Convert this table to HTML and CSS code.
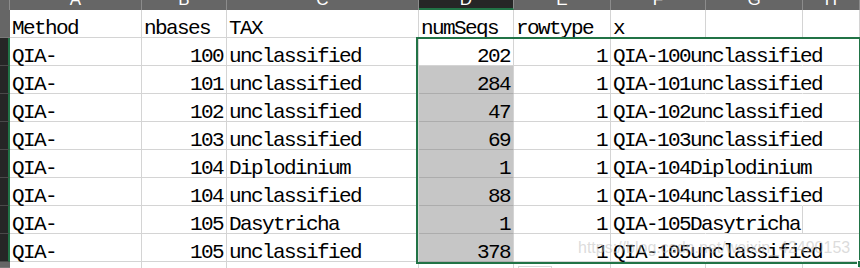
FILE: index.html
```html
<!DOCTYPE html>
<html>
<head>
<meta charset="utf-8">
<link rel="stylesheet" href="styles.css">
</head>
<body>
<div class="sheet">
  <div class="corner"></div>
  <div class="colhead"><span>A</span></div>
  <div class="colhead"><span>B</span></div>
  <div class="colhead"><span>C</span></div>
  <div class="colhead on"><span>D</span></div>
  <div class="colhead"><span>E</span></div>
  <div class="colhead"><span>F</span></div>
  <div class="colhead"><span>G</span></div>
  <div class="colhead"><span>H</span></div>

  <div class="rowhead"></div>
  <div class="c">Method</div><div class="c">nbases</div><div class="c">TAX</div><div class="c">numSeqs</div><div class="c">rowtype</div><div class="c">x</div><div class="c"></div><div class="c"></div>

  <div class="rowhead on"></div>
  <div class="c">QIA-</div><div class="c n">100</div><div class="c">unclassified</div><div class="c n">202</div><div class="c n">1</div><div class="c ov">QIA-100unclassified</div><div class="c ov"></div><div class="c"></div>

  <div class="rowhead on"></div>
  <div class="c">QIA-</div><div class="c n">101</div><div class="c">unclassified</div><div class="c n g">284</div><div class="c n">1</div><div class="c ov">QIA-101unclassified</div><div class="c ov"></div><div class="c"></div>

  <div class="rowhead on"></div>
  <div class="c">QIA-</div><div class="c n">102</div><div class="c">unclassified</div><div class="c n g">47</div><div class="c n">1</div><div class="c ov">QIA-102unclassified</div><div class="c ov"></div><div class="c"></div>

  <div class="rowhead on"></div>
  <div class="c">QIA-</div><div class="c n">103</div><div class="c">unclassified</div><div class="c n g">69</div><div class="c n">1</div><div class="c ov">QIA-103unclassified</div><div class="c ov"></div><div class="c"></div>

  <div class="rowhead on"></div>
  <div class="c">QIA-</div><div class="c n">104</div><div class="c">Diplodinium</div><div class="c n g">1</div><div class="c n">1</div><div class="c ov">QIA-104Diplodinium</div><div class="c ov"></div><div class="c"></div>

  <div class="rowhead on"></div>
  <div class="c">QIA-</div><div class="c n">104</div><div class="c">unclassified</div><div class="c n g">88</div><div class="c n">1</div><div class="c ov">QIA-104unclassified</div><div class="c ov"></div><div class="c"></div>

  <div class="rowhead on"></div>
  <div class="c">QIA-</div><div class="c n">105</div><div class="c">Dasytricha</div><div class="c n g">1</div><div class="c n">1</div><div class="c ov">QIA-105Dasytricha</div><div class="c"></div><div class="c"></div>

  <div class="rowhead on"></div>
  <div class="c">QIA-</div><div class="c n">105</div><div class="c">unclassified</div><div class="c n g">378</div><div class="c n">1</div><div class="c ov">QIA-105unclassified</div><div class="c ov"></div><div class="c"></div>

  <div class="rowhead"></div>
  <div class="c"></div><div class="c"></div><div class="c"></div><div class="c"></div><div class="c"></div><div class="c"></div><div class="c"></div><div class="c"></div>

  <div class="selection"><div class="handle"></div></div>
  <div class="quick"></div>
</div>
<div class="watermark">https://blog.csdn.net/weixin_42490153</div>
</body>
</html>
```

FILE: styles.css
```css
html, body {
  margin: 0;
  padding: 0;
  overflow: hidden;
  background: #ffffff;
}

body {
  width: 860px;
  height: 268px;
  position: relative;
}

.sheet {
  position: relative;
  display: grid;
  grid-template-columns: 10px 132px 85px 192px 95px 97px 95px 97px 1fr;
  grid-template-rows: 10px repeat(9, 28px) 6px;
  height: 268px;
  overflow: hidden;
  background: #ffffff;
  font-family: "Liberation Mono", "DejaVu Sans Mono", monospace;
  font-size: 21px;
  letter-spacing: -1.6px;
  color: #000000;
}

.corner {
  background: #666666;
  border-right: 1px solid #8c8c8c;
  box-sizing: border-box;
}

.colhead {
  background: #666666;
  border-right: 1px solid #8c8c8c;
  box-sizing: border-box;
  overflow: hidden;
  color: #ffffff;
  font-family: "Liberation Sans", Arial, sans-serif;
  font-size: 17px;
  letter-spacing: 0;
  line-height: 17px;
  text-align: center;
}

.colhead span {
  display: block;
  margin-top: -9px;
}

.colhead.on {
  background: #262626;
  border-bottom: 2px solid #217346;
}

.rowhead {
  background: #666666;
  border-bottom: 1px solid #7a7a7a;
  box-sizing: border-box;
}

.rowhead.on {
  background: #262626;
  border-bottom-color: #4a4a4a;
  border-right: 2px solid #217346;
}

.c {
  box-sizing: border-box;
  border-right: 1px solid #d4d4d4;
  border-bottom: 1px solid #d4d4d4;
  padding: 9px 4px 0 2px;
  line-height: 20px;
  white-space: nowrap;
  overflow: visible;
}

.c.n {
  text-align: right;
  padding-right: 3px;
}

.c.ov {
  border-right-color: transparent;
}

.c.g {
  background: #c6c6c6;
  border-bottom-color: #acacac;
}

.selection {
  position: absolute;
  grid-column: 5;
  grid-row: 3 / 11;
  top: -1px;
  left: -3px;
  right: -1px;
  bottom: -2px;
  border: 2px solid #217346;
  pointer-events: none;
}

.handle {
  position: absolute;
  right: -5px;
  bottom: -5px;
  width: 6px;
  height: 6px;
  background: #217346;
  border: 1px solid #ffffff;
  border-right: none;
  border-bottom: none;
}

.quick {
  position: absolute;
  grid-column: 6;
  grid-row: 11;
  top: 4px;
  left: 4px;
  width: 32px;
  height: 30px;
  border: 1px solid #d8d8d8;
  pointer-events: none;
}

.watermark {
  position: absolute;
  left: 578px;
  top: 238px;
  font-family: "Liberation Sans", Arial, sans-serif;
  font-size: 16px;
  line-height: 20px;
  color: rgba(190, 190, 190, 0.55);
  white-space: nowrap;
}
```
